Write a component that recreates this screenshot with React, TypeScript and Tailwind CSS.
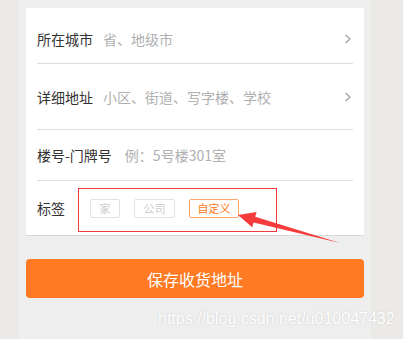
import React from "react";

const cjk = { fontFamily: '"Noto Sans CJK SC", "Noto Sans", sans-serif' };

function Chevron() {
  return (
    <svg width="8" height="10" viewBox="0 0 8 10" className="shrink-0">
      <path d="M1.5 1 L6 5 L1.5 9" fill="none" stroke="#9a9a9a" strokeWidth="1.1" />
    </svg>
  );
}

function Row({
  label,
  placeholder,
  arrow,
  className,
  gapClass = "ml-[11px]",
}: {
  label: string;
  placeholder: string;
  arrow?: boolean;
  className: string;
  gapClass?: string;
}) {
  return (
    <div className={`flex items-center ${className}`}>
      <span className="text-[14px] text-[#333333] leading-none">{label}</span>
      <span className={`${gapClass} text-[14px] text-[#b0b0b0] leading-none flex-1`}>{placeholder}</span>
      {arrow && (
        <div className="mr-[1px]">
          <Chevron />
        </div>
      )}
    </div>
  );
}

export default function App() {
  return (
    <div className="relative w-[403px] h-[339px] overflow-hidden bg-[#ebeae7]" style={cjk}>
      <div className="ml-[19px] w-[352px] h-full bg-[#eeeeee] px-[7px] pt-[8px]">
        <div className="bg-white border-b border-[#d9d9d9] px-[11px]">
          <Row label="所在城市" placeholder="省、地级市" arrow className="h-[55px] pt-[7px]" gapClass="ml-[10px]" />
          <div className="h-px bg-[#dedede]" />
          <Row label="详细地址" placeholder="小区、街道、写字楼、学校" arrow className="h-[65px]" gapClass="ml-[10px]" />
          <div className="h-px bg-[#dedede]" />
          <Row label="楼号-门牌号" placeholder="例：5号楼301室" className="h-[50px]" gapClass="ml-[13px]" />
          <div className="h-px bg-[#dedede]" />
          <div className="flex items-center h-[54px]">
            <span className="text-[14px] text-[#333333] leading-none">标签</span>
            <div className="ml-[25px] flex gap-[14px]">
              <span className="w-[30px] h-[19px] flex items-center justify-center border border-[#e2e2e2] rounded-[2px] text-[11px] text-[#cccccc] leading-none">
                家
              </span>
              <span className="w-[41px] h-[19px] flex items-center justify-center border border-[#e2e2e2] rounded-[2px] text-[11px] text-[#cccccc] leading-none">
                公司
              </span>
              <span className="w-[50px] h-[19px] flex items-center justify-center border border-[#ffa56a] rounded-[2px] text-[11px] text-[#ff7a22] leading-none">
                自定义
              </span>
            </div>
          </div>
        </div>
        <button className="mt-[23px] w-full h-[39px] rounded-[4px] bg-[#ff7a22] text-white text-[16px] leading-none flex items-center justify-center">
          保存收货地址
        </button>
      </div>

      <div className="absolute left-[78px] top-[188px] w-[199px] h-[44px] border border-[#f03b3b]" />

      <svg className="absolute left-0 top-0 pointer-events-none" width="403" height="339" viewBox="0 0 403 339">
        <polygon
          points="238,215 256.6,211.9 255.2,216.7 340,243 253.6,222.5 252.2,227.3"
          fill="#f53b3b"
        />
      </svg>

      <div
        className="absolute left-[158px] top-[311px] text-[16px] leading-none text-white [text-shadow:0_0_1.5px_rgba(150,150,150,0.45)]"
        style={{ fontFamily: '"Liberation Sans", Arial, sans-serif' }}
      >
        https://blog.csdn.net/u010047432
      </div>
    </div>
  );
}
